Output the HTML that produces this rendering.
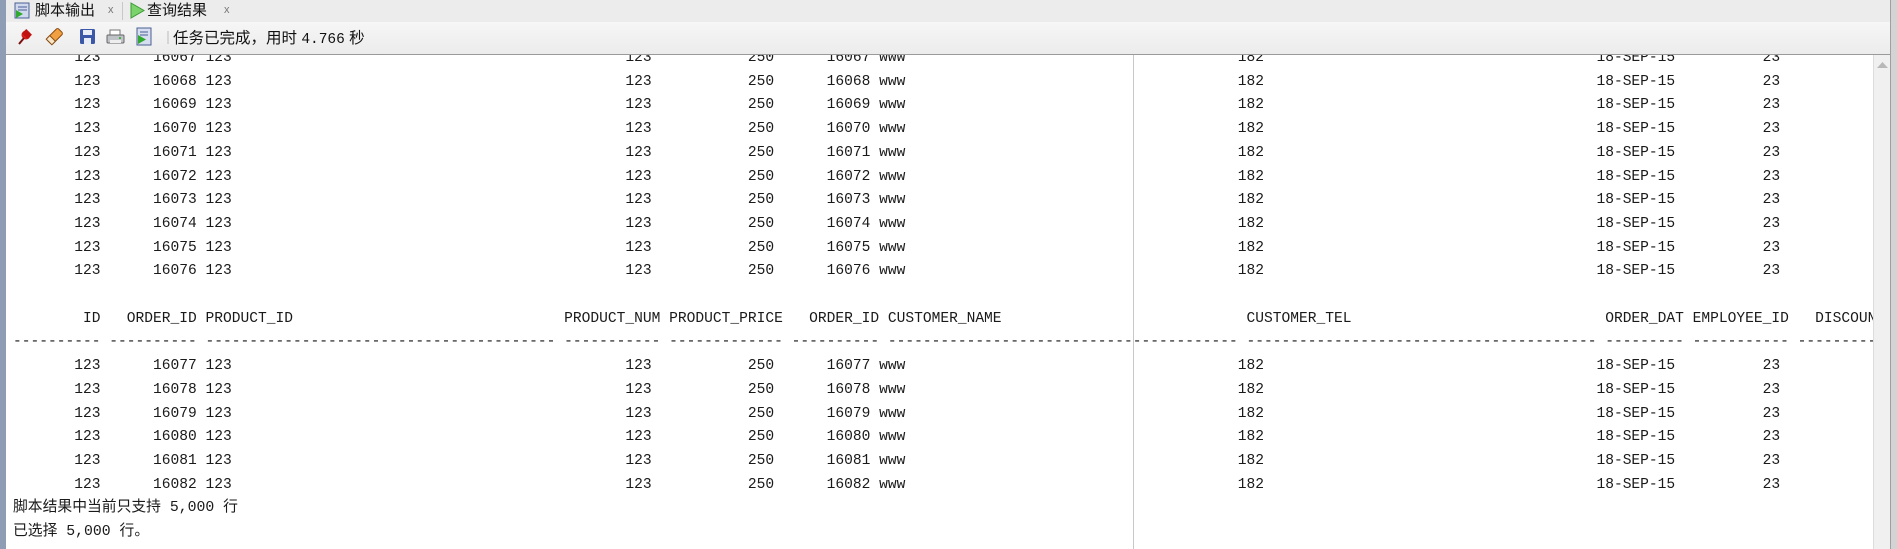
<!DOCTYPE html>
<html><head><meta charset="utf-8"><style>
body{margin:0;width:1897px;height:549px;overflow:hidden;background:#fff;position:relative;font-family:"Liberation Sans","Noto Sans CJK SC",sans-serif}
#lb{position:absolute;left:0;top:0;width:6px;height:549px;background:#8e9db3}
#tabs{position:absolute;left:6px;top:0;right:0;height:22px;background:#ececec}
.tab{position:absolute;top:0;height:22px;font-size:15px;line-height:21px;color:#111}
.tab .x{position:absolute;font-size:11px;color:#777}
#tb{position:absolute;left:6px;top:22px;right:7px;height:32px;background:linear-gradient(#f6f6f6,#ececec);border-bottom:1px solid #9a9a9a}
#msg{position:absolute;left:167px;top:4px;font-size:15.5px;color:#111}
#msg span{font-family:"Liberation Mono",monospace;font-size:14.5px}
#content{position:absolute;left:6px;top:55px;width:1867px;height:494px;overflow:hidden;background:#fff}
pre{position:absolute;left:7px;top:-8px;margin:0;font-family:"Liberation Mono","Noto Sans CJK SC",monospace;font-size:14.58px;line-height:23.7px;color:#1a1a1a}
.cn{font-family:"Liberation Mono","Noto Sans CJK SC",sans-serif;font-size:14.8px}
#vl{position:absolute;left:1127px;top:0;width:1px;height:494px;background:#c8c8c8}
#sb{position:absolute;left:1873px;top:55px;width:17px;height:494px;background:#f0f0f0;border-left:1px solid #ddd}
#rb{position:absolute;left:1890px;top:0;width:7px;height:549px;background:#d4d4d4;border-left:1px solid #a0a0a0}
</style></head><body>
<div id="lb"></div>
<div id="tabs">
 <div class="tab" style="left:6px;width:110px">
  <svg width="17" height="17" style="position:absolute;left:2px;top:2px"><rect x="1" y="1" width="14" height="15" fill="#cfd8ec" stroke="#4a5f94"/><line x1="4" y1="5" x2="13" y2="5" stroke="#4a5f94"/><line x1="4" y1="8" x2="13" y2="8" stroke="#4a5f94"/><polygon points="2,8 9,12 2,16" fill="#2faa2f"/></svg>
  <span style="position:absolute;left:23px">脚本输出</span><span class="x" style="left:96px;top:0">x</span></div>
 <div style="position:absolute;left:116px;top:2px;width:1px;height:18px;background:#c8c8c8"></div>
 <div class="tab" style="left:120px;width:120px">
  <svg width="17" height="17" style="position:absolute;left:3px;top:2px"><polygon points="2,1 15,8.5 2,16" fill="#7bd36b" stroke="#3b9a35"/></svg>
  <span style="position:absolute;left:21px">查询结果</span><span class="x" style="left:98px;top:0">x</span></div>
</div>
<div id="tb">
 <svg width="160" height="32" style="position:absolute;left:8px;top:0">
  <circle cx="12" cy="13" r="4.5" fill="#d81c1c"/><line x1="5" y1="22" x2="10" y2="16" stroke="#7a1010" stroke-width="2"/><rect x="9" y="9" width="8" height="6" transform="rotate(45 13 12)" fill="#c01010"/>
  <g transform="rotate(-45 40 15)"><rect x="33" y="11" width="16" height="8" rx="2" fill="#f0a040" stroke="#8a4a10"/><rect x="33" y="11" width="5" height="8" fill="#f6e6c8" stroke="#8a4a10"/></g>
  <rect x="66" y="7" width="15" height="15" rx="1.5" fill="#3b57a8"/><rect x="69" y="8" width="9" height="5" fill="#e8ecf6"/><rect x="70" y="16" width="7" height="6" fill="#e8ecf6"/>
  <rect x="96" y="8" width="10" height="6" fill="#fff" stroke="#777"/><rect x="93" y="13" width="17" height="8" rx="1" fill="#bfc3c8" stroke="#666"/><rect x="96" y="18" width="11" height="3" fill="#eee"/><circle cx="106" cy="16" r="1" fill="#2a2"/>
  <rect x="123" y="6" width="14" height="17" fill="#d6def0" stroke="#4a5f94"/><line x1="126" y1="10" x2="134" y2="10" stroke="#4a5f94"/><line x1="126" y1="13" x2="134" y2="13" stroke="#4a5f94"/><polygon points="124,13 132,17.5 124,22" fill="#2faa2f"/>
  <line x1="154" y1="9" x2="154" y2="22" stroke="#bbb"/>
 </svg>
 <div id="msg">任务已完成，用时 <span>4.766</span> 秒</div>
</div>
<div id="content">
<div id="vl"></div>
<pre>       123      16067 123                                             123           250      16067 www                                      182                                      18-SEP-15          23
       123      16068 123                                             123           250      16068 www                                      182                                      18-SEP-15          23
       123      16069 123                                             123           250      16069 www                                      182                                      18-SEP-15          23
       123      16070 123                                             123           250      16070 www                                      182                                      18-SEP-15          23
       123      16071 123                                             123           250      16071 www                                      182                                      18-SEP-15          23
       123      16072 123                                             123           250      16072 www                                      182                                      18-SEP-15          23
       123      16073 123                                             123           250      16073 www                                      182                                      18-SEP-15          23
       123      16074 123                                             123           250      16074 www                                      182                                      18-SEP-15          23
       123      16075 123                                             123           250      16075 www                                      182                                      18-SEP-15          23
       123      16076 123                                             123           250      16076 www                                      182                                      18-SEP-15          23

        ID   ORDER_ID PRODUCT_ID                               PRODUCT_NUM PRODUCT_PRICE   ORDER_ID CUSTOMER_NAME                            CUSTOMER_TEL                             ORDER_DAT EMPLOYEE_ID   DISCOUNT
---------- ---------- ---------------------------------------- ----------- ------------- ---------- ---------------------------------------- ---------------------------------------- --------- ----------- ----------
       123      16077 123                                             123           250      16077 www                                      182                                      18-SEP-15          23
       123      16078 123                                             123           250      16078 www                                      182                                      18-SEP-15          23
       123      16079 123                                             123           250      16079 www                                      182                                      18-SEP-15          23
       123      16080 123                                             123           250      16080 www                                      182                                      18-SEP-15          23
       123      16081 123                                             123           250      16081 www                                      182                                      18-SEP-15          23
       123      16082 123                                             123           250      16082 www                                      182                                      18-SEP-15          23
<span class="cn">脚本结果中当前只支持 5,000 行</span>
<span class="cn">已选择 5,000 行。</span></pre>
</div>
<div id="sb"><svg width="17" height="14" style="position:absolute;left:0;top:3px"><polygon points="3,10 8.5,4 14,10" fill="#b8b8b8"/></svg></div>
<div id="rb"></div>
</body></html>
